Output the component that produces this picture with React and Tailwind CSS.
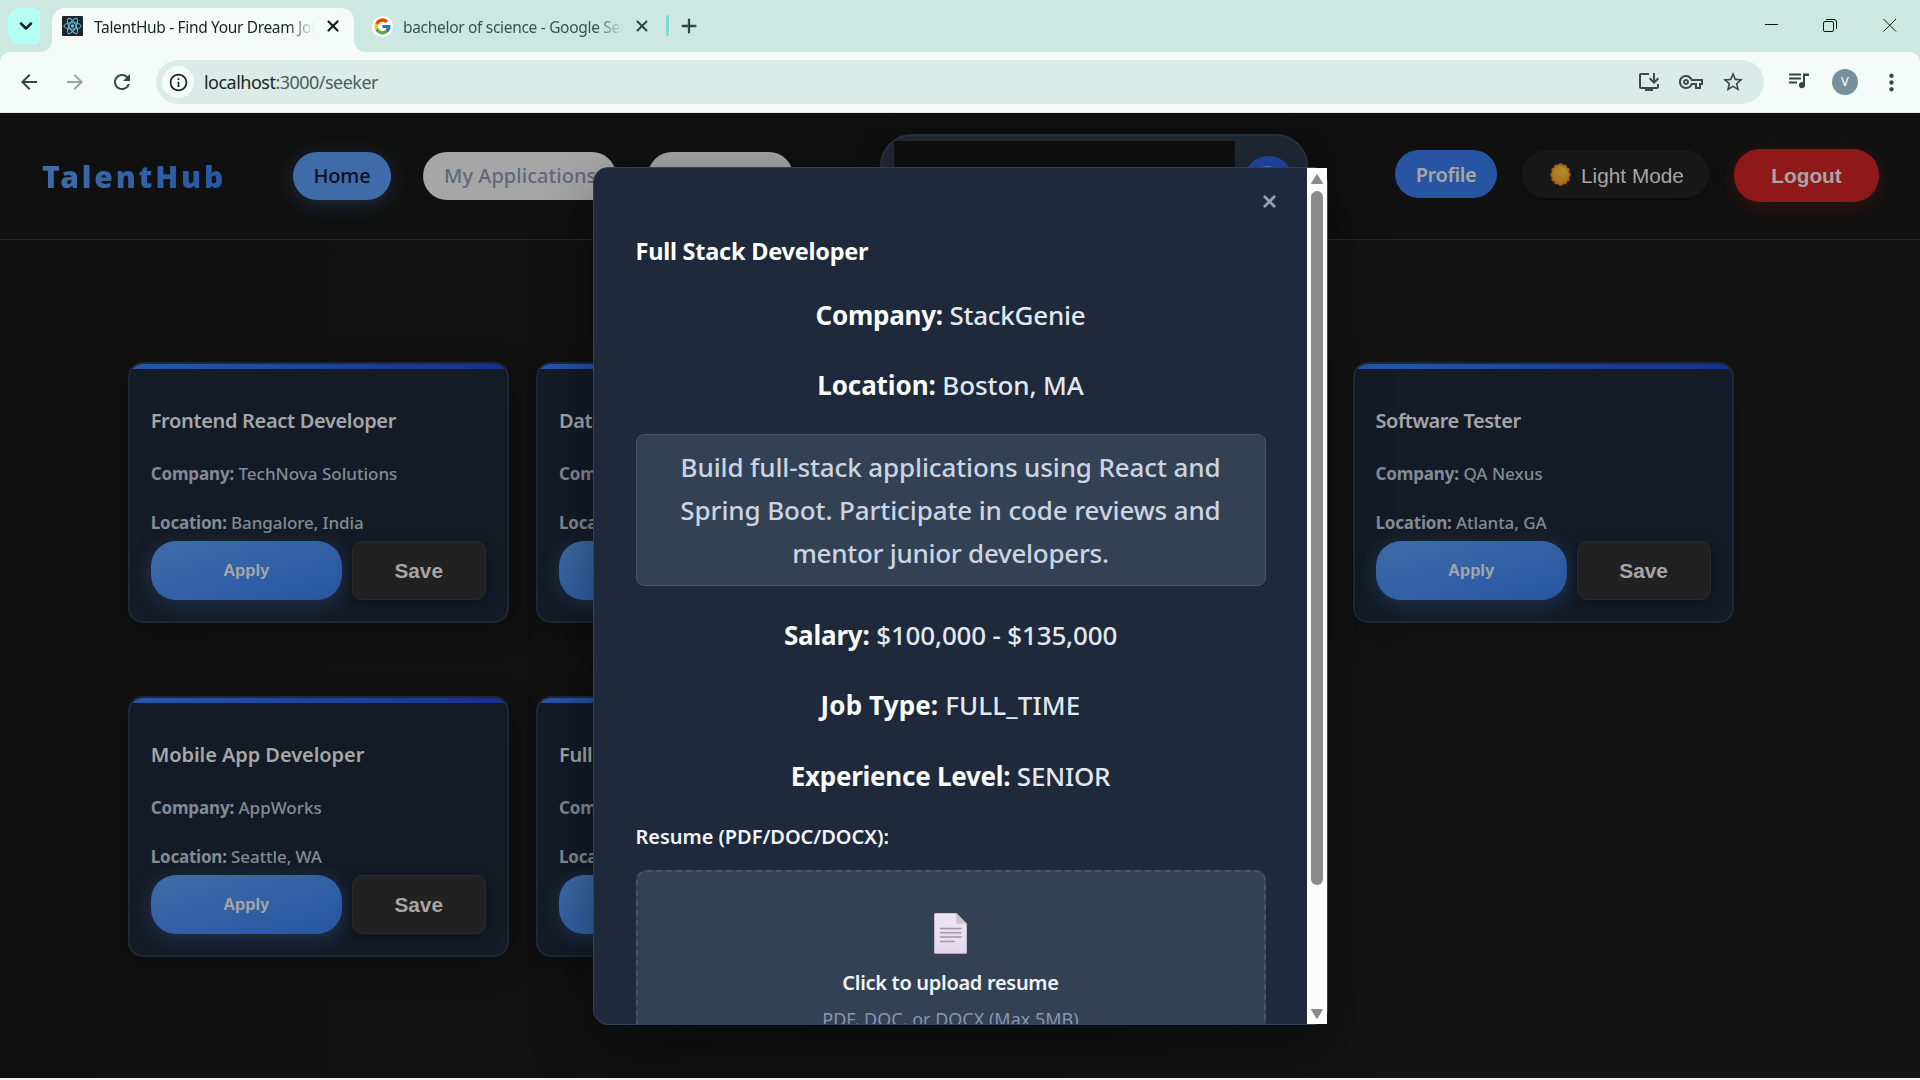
import React from "react";
import { ChevronDown, X, Plus, Search } from "lucide-react";
import { FcGoogle } from "react-icons/fc";
import {
  MdArrowBack,
  MdArrowForward,
  MdRefresh,
  MdOutlineInfo,
  MdOutlineInstallDesktop,
  MdOutlineVpnKey,
  MdStarOutline,
  MdMoreVert,
} from "react-icons/md";

function ReactMark() {
  return (
    <svg viewBox="0 0 21 20" className="h-5 w-[21px] shrink-0">
      <rect width="21" height="20" rx="1" fill="#20232a" />
      <g fill="none" stroke="#5bc4de" strokeWidth="1">
        <ellipse cx="10.5" cy="10" rx="8.6" ry="3.3" />
        <ellipse cx="10.5" cy="10" rx="8.6" ry="3.3" transform="rotate(60 10.5 10)" />
        <ellipse cx="10.5" cy="10" rx="8.6" ry="3.3" transform="rotate(120 10.5 10)" />
      </g>
      <circle cx="10.5" cy="10" r="1.7" fill="#5bc4de" />
    </svg>
  );
}

function SunMark() {
  const petals = Array.from({ length: 12 }, (_, i) => {
    const a = (i * Math.PI) / 6;
    return <circle key={i} cx={10.5 + 7.7 * Math.cos(a)} cy={11.5 + 8.8 * Math.sin(a)} r="2.5" fill="#a4611d" />;
  });
  return (
    <svg viewBox="0 0 21 23" className="h-[23px] w-[21px]">
      <defs>
        <radialGradient id="sun" cx="0.65" cy="0.3" r="0.8">
          <stop offset="0" stopColor="#b08e28" />
          <stop offset="1" stopColor="#a8701f" />
        </radialGradient>
      </defs>
      {petals}
      <circle cx="10.5" cy="11.500" r="8.4" fill="url(#sun)" />
    </svg>
  );
}

function DocMark() {
  return (
    <svg viewBox="0 0 33 41" className="h-[41px] w-[33px]">
      <defs>
        <linearGradient id="sheet" x1="0" y1="0" x2="0" y2="1">
          <stop offset="0" stopColor="#eee6f4" />
          <stop offset="1" stopColor="#e2d8ee" />
        </linearGradient>
      </defs>
      <path d="M1.5 0H22.5L33 10.5V39.5Q33 41 31.5 41H1.5Q0 41 0 39.5V1.5Q0 0 1.5 0Z" fill="#b3a6bd" />
      <path d="M2 .4H22.3L32.4 10.7V38.6Q32.4 40 31 40H2Q.7 40 .7 38.6V1.8Q.7 .4 2 .4Z" fill="url(#sheet)" />
      <path d="M22.3 .4L32.4 10.7H23.5Q22.3 10.7 22.3 9.5Z" fill="#c9c3cf" />
      <path d="M6.5 15.5H27M6.5 19.8H27M6.5 24.1H27M6.5 28.4H20" stroke="#a097a8" strokeWidth="1.5" strokeLinecap="round" />
    </svg>
  );
}

function QueueIcon() {
  return (
    <svg viewBox="0 0 20 16" className="ml-[25px] mt-[-2px] h-4 w-5 shrink-0" fill="currentColor">
      <path d="M0 .5H12V2.500H0ZM0 4.500H12V6.500H0ZM0 8.500H8V10.500H0ZM14 .5H20V3H16V11.700A3.100 3.100 0 1 1 14 9.300Z" />
    </svg>
  );
}

function WindowControls() {
  return (
    <svg viewBox="0 0 140 20" className="ml-auto mr-[20px] mt-[15px] h-5 w-[140px]" fill="none" stroke="#111" strokeWidth="1">
      <path d="M5 9.5H18" />
      <rect x="63.5" y="6.5" width="10" height="10" rx="1.5" />
      <path d="M66 4.5H74Q76.500 4.500 76.500 7V14" />
      <path d="M123.500 4L136 16.500M136 4L123.500 16.500" />
    </svg>
  );
}

function Browser() {
  return (
    <div className="h-[113px] bg-[#cce8e1] font-['Noto_Sans',sans-serif]">
      <div className="flex h-[52px]">
        <div className="ml-2 mt-2 flex h-9 w-9 items-center justify-center rounded-[12px] bg-[#b3fff3] text-[#12201d]">
          <ChevronDown size={20} strokeWidth={3} />
        </div>
        <div className="ml-2 mt-2 flex h-11 w-[302px] items-start rounded-t-[13px] bg-[#f5fbf9]">
          <div className="-ml-3 h-11 w-3 self-end bg-[#f5fbf9]">
            <div className="h-11 w-3 rounded-br-[12px] bg-[#cce8e1]" />
          </div>
          <div className="ml-[10px] mt-2"><ReactMark /></div>
          <div className="ml-[11px] mt-[7px] w-[220px] overflow-hidden whitespace-nowrap text-[15.5px] leading-6 tracking-[-0.34px] text-[#1b2422] [mask-image:linear-gradient(to_right,black_88%,transparent_100%)]">
            TalentHub - Find Your Dream Job
          </div>
          <X size={18} strokeWidth={3} className="ml-[10px] mt-[9px] shrink-0 text-[#15201e]" />
          <div className="ml-auto -mr-3 h-11 w-3 shrink-0 bg-[#f5fbf9]">
            <div className="h-11 w-3 rounded-bl-[12px] bg-[#cce8e1]" />
          </div>
        </div>
        <div className="ml-[18px] mt-4 flex h-[21px] w-[21px] items-center justify-center rounded-full bg-white">
          <FcGoogle size={19} />
        </div>
        <div className="ml-[10px] mt-[15px] w-[220px] overflow-hidden whitespace-nowrap text-[15.5px] leading-6 tracking-[-0.31px] text-[#3a5550] [mask-image:linear-gradient(to_right,black_88%,transparent_100%)]">
          bachelor of science - Google Search
        </div>
        <X size={18} strokeWidth={2.700} className="ml-[10px] mt-[17px] shrink-0 text-[#2f4844]" />
        <div className="ml-[15px] mt-[15px] h-[21px] w-[3px] rounded-full bg-[#7fdccd]" />
        <Plus size={22} strokeWidth={2.500} className="ml-[9px] mt-[15px] text-[#2f4844]" />
        <WindowControls />
      </div>
      <div className="flex h-[61px] items-center rounded-t-[10px] border-b border-[#dfe9e6] bg-[#f5fbf9] text-[#2f4844]">
        <MdArrowBack size={24} className="ml-[17px]" />
        <MdArrowForward size={24} className="ml-[22px] text-[#9aa5a2]" />
        <MdRefresh size={24} className="ml-[23px]" />
        <div className="ml-[22px] flex h-11 w-[1608px] items-center rounded-full bg-[#daece7]">
          <div className="ml-[6px] flex h-8 w-8 items-center justify-center rounded-full bg-[#f5fbf9]">
            <MdOutlineInfo size={21} className="text-[#1b2422]" />
          </div>
          <div className="ml-[10px] whitespace-nowrap text-[18px] leading-[26px] tracking-[-0.520px] text-[#48605b]">
            <span className="text-[#1b2422]">localhost</span>:3000/seeker
          </div>
          <div className="ml-auto mr-[19px] flex items-center gap-[18px] text-[#3d4a47]">
            <MdOutlineInstallDesktop size={24} />
            <MdOutlineVpnKey size={24} />
            <MdStarOutline size={24} />
          </div>
        </div>
        <QueueIcon />
        <div className="ml-[23px] flex h-[26px] w-[26px] items-center justify-center rounded-full bg-[#78909c] text-[13px] text-white">V</div>
        <MdMoreVert size={27} className="ml-5" />
      </div>
    </div>
  );
}

function Header() {
  return (
    <header className="flex h-[127px] items-start border-b border-[#1f2730] bg-[#101010]">
      <div className="ml-[42px] mt-[43px] w-[190px] whitespace-nowrap bg-gradient-to-r from-[#3f6ca8] to-[#2755a2] bg-clip-text text-[30px] font-black leading-[42px] tracking-[2.850px] text-transparent">
        TalentHub
      </div>
      <nav className="ml-[61px] mt-[39px] flex gap-8 text-[20px] font-semibold leading-[48px]">
        <div className="h-12 w-[98px] rounded-[24px] bg-[#3f6ca8] text-center font-medium tracking-[-0.100px] text-[#0b101c] shadow-[0_4px_20px_rgba(63,108,168,0.3)]">
          Home
        </div>
        <div className="h-12 w-[193px] rounded-[24px] bg-[#a6a6a6] pl-[21px] font-medium tracking-[0.050px] text-[#616978]">My Applications</div>
        <div className="h-12 w-[145px] rounded-[24px] bg-[#a2a2a2] text-center text-[#616978]">Saved Jobs</div>
      </nav>
      <div className="ml-[87px] mt-[21px] flex h-[92px] w-[428px] rounded-[32px] border-2 border-[#27313f] bg-[#1f2732] pl-[11px] shadow-[0_8px_30px_rgba(0,0,0,0.3)]">
        <div className="mt-1 h-20 w-[343px] border border-[#2a2a2a] bg-[#0f0f0f]" />
        <div className="ml-2 mt-5 flex h-[49px] w-[49px] items-center justify-center rounded-full bg-[#1f46a0] text-[#4a78c0]">
          <Search size={38} strokeWidth={1.300} />
        </div>
      </div>
      <div className="ml-[87px] mt-[37px] h-12 w-[102px] rounded-[24px] bg-[#2755a2] text-center text-[20px] font-semibold leading-[50px] tracking-[-0.400px] text-[#a6a6a6]">
        Profile
      </div>
      <div className="ml-[25px] mt-[37px] flex h-12 w-[187px] items-center rounded-[24px] bg-[#171717] pl-[28px] font-['Liberation_Sans',Arial,sans-serif] text-[20.800px] text-[#a6a6a6] shadow-[0_2px_8px_rgba(0,0,0,0.3)]">
        <SunMark />
        <span className="ml-[10px] mt-[3px] whitespace-nowrap">Light Mode</span>
      </div>
      <div className="ml-[25px] mt-9 h-[53px] w-[145px] rounded-[26px] bg-[#8f1919] text-center font-['Liberation_Sans',Arial,sans-serif] text-[20.800px] font-bold leading-[54px] text-[#a6a6a6] shadow-[0_4px_20px_rgba(143,25,25,0.3)]">
        Logout
      </div>
    </header>
  );
}

function JobCard({ title, company, location, titleClass }) {
  return (
    <div className="h-[261px] w-[381px] overflow-hidden rounded-[15px] border-2 border-[#1f2935] bg-[#141b27] shadow-[0_8px_30px_rgba(0,0,0,0.25)]">
      <div className="h-[5px] bg-gradient-to-r from-[#2857a5] to-[#14318f]" />
      <div className="px-[20.700px] pt-[38px]">
        <h3 className={"whitespace-nowrap text-[20px] font-semibold leading-7 text-[#a6a6a6] " + titleClass}>{title}</h3>
        <p className="mt-[27px] whitespace-nowrap text-[17px] font-medium leading-6 text-[#848b94]">
          <b className="font-bold tracking-[-0.150px]">Company:</b> {company}
        </p>
        <p className="mt-[25px] whitespace-nowrap text-[17px] font-medium leading-6 tracking-[-0.080px] text-[#848b94]">
          <b className="font-bold tracking-[-0.220px]">Location:</b> {location}
        </p>
        <div className="mt-[6px] flex gap-[10px] font-['Liberation_Sans',Arial,sans-serif] font-bold text-[#a6a6a6]">
          <div className="h-[59px] w-[191px] rounded-[25px] bg-gradient-to-br from-[#3f6ca8] to-[#2755a2] text-center text-[16.600px] leading-[59px] shadow-[0_4px_20px_rgba(63,108,168,0.3)]">
            Apply
          </div>
          <div className="h-[59px] w-[134px] rounded-[10px] border border-[#2b2b2b] bg-[#212121] text-center text-[20.800px] leading-[57px] shadow-[0_4px_15px_rgba(0,0,0,0.3)]">
            Save
          </div>
        </div>
      </div>
    </div>
  );
}

function Field({ label, value, className }) {
  return (
    <p className={"mb-7 h-[42px] whitespace-nowrap text-center text-[26px] font-medium leading-[42px] text-[#e2e8f0] " + className}>
      <b className="font-bold text-[#f8fafc]">{label}</b> {value}
    </p>
  );
}

function Modal() {
  return (
    <div className="absolute left-[593px] top-[54px] flex h-[858px] w-[735px] rounded-[15px] border border-[#334155] bg-[#1e293b] shadow-[0_25px_60px_rgba(0,0,0,0.4)]">
      <div className="h-[856px] w-[713px] overflow-hidden rounded-bl-[14px] pl-[41.500px] pr-[41.500px]">
        <div className="mr-[-15px] flex h-[68px] justify-end pt-[24px]">
          <X size={19} strokeWidth={3.400} className="mr-[2px] text-[#94a3b8]" />
        </div>
        <h2 className="whitespace-nowrap text-[23.500px] font-bold leading-[30px] tracking-[-0.240px] text-white">Full Stack Developer</h2>
        <div className="h-7" />
        <Field label="Company:" value="StackGenie" className="tracking-[-0.250px]" />
        <Field label="Location:" value="Boston, MA" className="tracking-[-0.100px]" />
        <div className="h-[152px] rounded-lg border border-[#465569] bg-[#334155] pt-[11px] text-center text-[26px] font-medium leading-[43px] tracking-[-0.120px] text-[#cbd5e1]">
          Build full-stack applications using React and
          <br />
          Spring Boot. Participate in code reviews and
          <br />
          <span className="tracking-[-0.280px]">mentor junior developers.</span>
        </div>
        <div className="h-7" />
        <Field label="Salary:" value="$100,000 - $135,000" className="tracking-[-0.180px]" />
        <Field label="Job Type:" value="FULL_TIME" className="tracking-[0.120px]" />
        <Field label="Experience Level:" value="SENIOR" className="relative top-px tracking-[-0.260px]" />
        <div className="-mt-px whitespace-nowrap text-[20px] font-semibold leading-7 tracking-[-0.050px] text-[#f1f5f9]">Resume (PDF/DOC/DOCX):</div>
        <div className="mt-[19px] flex h-[250px] flex-col items-center rounded-[10px] border-2 border-dashed border-[#475569] bg-[#334155] pt-[41px]">
          <DocMark />
          <div className="mt-[15px] whitespace-nowrap text-[20px] font-semibold leading-7 tracking-[-0.300px] text-[#f1f5f9]">Click to upload resume</div>
          <div className="mt-[10px] whitespace-nowrap text-[18px] leading-6 text-[#8796ad]">PDF, DOC, or DOCX (Max 5MB)</div>
        </div>
      </div>
      <div className="flex h-[856px] w-5 flex-col items-center bg-[#fcfcfc]">
        <svg viewBox="0 0 12 10" className="mt-[6px] h-[10px] w-3"><path d="M6 .5L11.500 9.500H.5Z" fill="#8b8b8b" stroke="#8b8b8b" strokeLinejoin="round" /></svg>
        <div className="mt-[7px] h-[694px] w-3 rounded-full bg-[#8b8b8b]" />
        <svg viewBox="0 0 12 10" className="mb-[5px] mt-auto h-[10px] w-3"><path d="M6 9.500L11.500 .5H.5Z" fill="#8b8b8b" stroke="#8b8b8b" strokeLinejoin="round" /></svg>
      </div>
    </div>
  );
}

export default function App() {
  return (
    <div className="h-[1080px] w-[1920px] overflow-hidden bg-[#f3f3f3]">
      <Browser />
      <div className="relative h-[965px] overflow-hidden bg-gradient-to-r from-[#101010] to-[#141414] font-['Noto_Sans',sans-serif]">
        <Header />
        <main className="grid grid-cols-[repeat(4,381px)] gap-x-[27.300px] gap-y-[73px] pl-32 pt-[122px]">
          <JobCard title="Frontend React Developer" company="TechNova Solutions" location="Bangalore, India" titleClass="tracking-[-0.340px]" />
          <JobCard title="Data Analyst" company="DataWorks" location="Chicago, IL" titleClass="tracking-[-0.360px]" />
          <div />
          <JobCard title="Software Tester" company="QA Nexus" location="Atlanta, GA" titleClass="tracking-[-0.490px]" />
          <JobCard title="Mobile App Developer" company="AppWorks" location="Seattle, WA" titleClass="tracking-[-0.060px]" />
          <JobCard title="Full Stack Developer" company="StackGenie" location="Boston, MA" titleClass="tracking-[-0.360px]" />
        </main>
        <Modal />
      </div>
    </div>
  );
}
